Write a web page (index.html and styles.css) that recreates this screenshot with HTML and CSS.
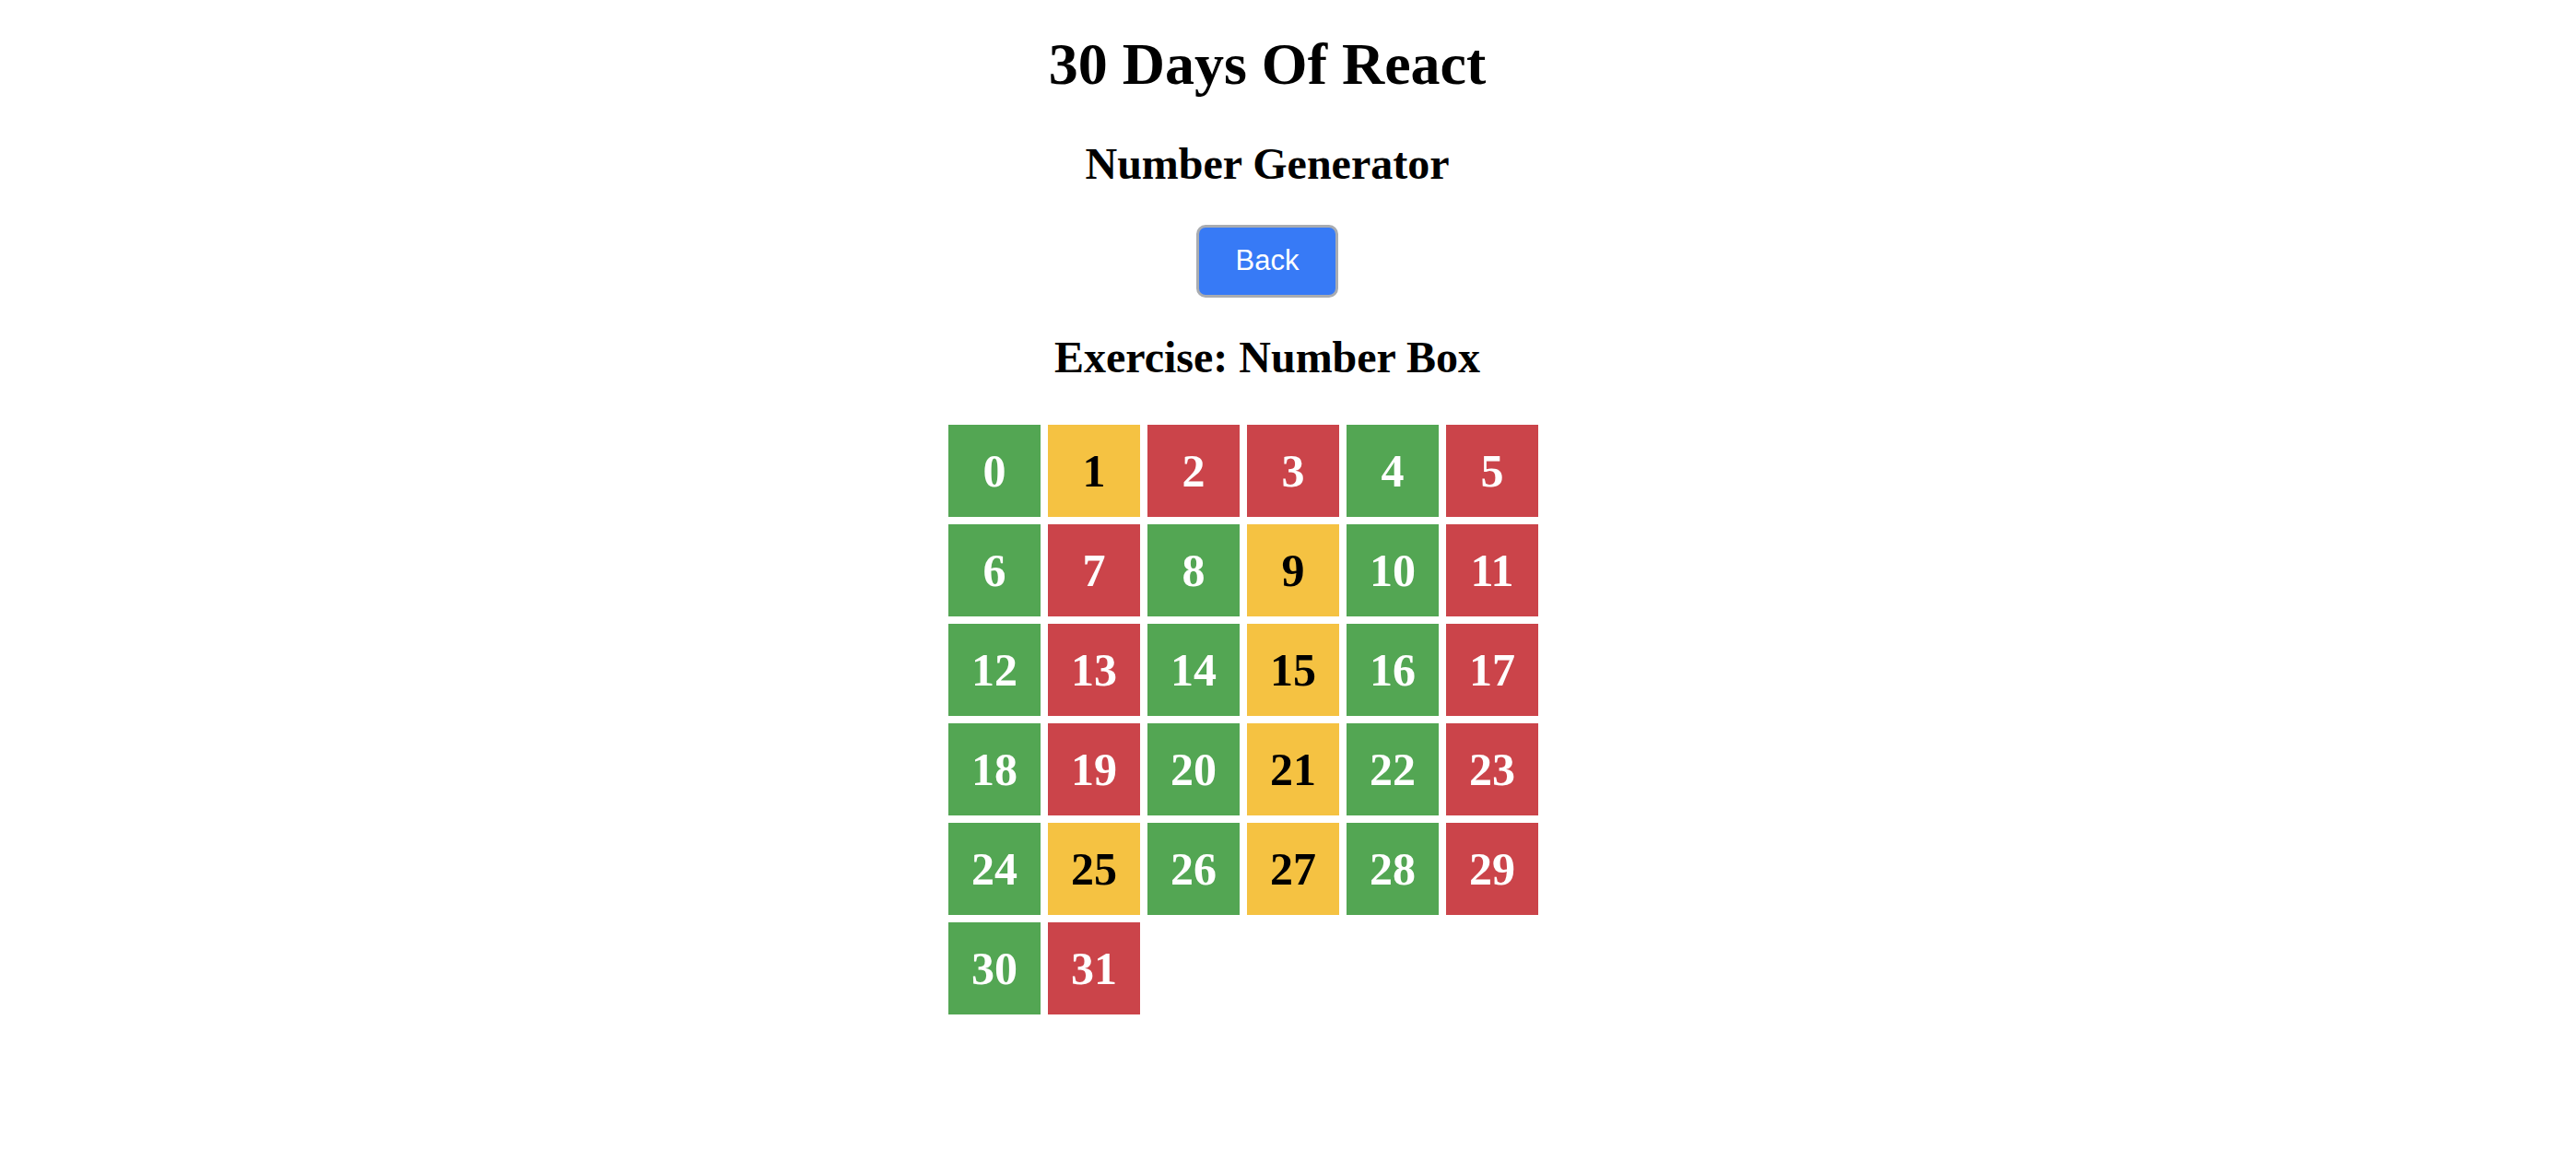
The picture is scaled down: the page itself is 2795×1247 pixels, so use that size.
FILE: index.html
```html
<!DOCTYPE html>
<html lang="en">
<head>
<meta charset="utf-8">
<title>30 Days Of React</title>
<link rel="stylesheet" href="styles.css">
</head>
<body>
<div class="page">
  <h1 class="title">30 Days Of React</h1>
  <h2 class="subtitle">Number Generator</h2>
  <button class="back-btn">Back</button>
  <h2 class="exercise">Exercise: Number Box</h2>
  <div class="grid">
    <div class="box even">0</div>
    <div class="box odd">1</div>
    <div class="box prime">2</div>
    <div class="box prime">3</div>
    <div class="box even">4</div>
    <div class="box prime">5</div>
    <div class="box even">6</div>
    <div class="box prime">7</div>
    <div class="box even">8</div>
    <div class="box odd">9</div>
    <div class="box even">10</div>
    <div class="box prime">11</div>
    <div class="box even">12</div>
    <div class="box prime">13</div>
    <div class="box even">14</div>
    <div class="box odd">15</div>
    <div class="box even">16</div>
    <div class="box prime">17</div>
    <div class="box even">18</div>
    <div class="box prime">19</div>
    <div class="box even">20</div>
    <div class="box odd">21</div>
    <div class="box even">22</div>
    <div class="box prime">23</div>
    <div class="box even">24</div>
    <div class="box odd">25</div>
    <div class="box even">26</div>
    <div class="box odd">27</div>
    <div class="box even">28</div>
    <div class="box prime">29</div>
    <div class="box even">30</div>
    <div class="box prime">31</div>
  </div>
</div>
</body>
</html>
```
FILE: styles.css
```css
html, body {
  margin: 0;
  padding: 0;
  background: #ffffff;
}

.page {
  width: 2750px;
  display: flex;
  flex-direction: column;
  align-items: center;
  font-family: "Liberation Serif", "Times New Roman", serif;
  color: #000;
  padding-top: 33px;
}

.title {
  font-size: 64px;
  line-height: 1.15;
  font-weight: bold;
  margin: 0;
}

.subtitle {
  font-size: 48px;
  line-height: 1.15;
  font-weight: bold;
  margin: 43px 0 0;
}

.back-btn {
  margin-top: 39px;
  height: 79px;
  padding: 0 40px;
  background: #377af6;
  color: #ffffff;
  border: 3px solid #a9acb1;
  border-radius: 10px;
  font-family: "Liberation Sans", Arial, sans-serif;
  font-size: 31px;
}

.exercise {
  font-size: 48px;
  line-height: 1.15;
  font-weight: bold;
  margin: 37px 0 0;
}

.grid {
  box-sizing: border-box;
  width: 700px;
  padding: 4px;
  margin-top: 42px;
  display: flex;
  flex-wrap: wrap;
  gap: 8px;
}

.box {
  width: 100px;
  height: 100px;
  display: flex;
  align-items: center;
  justify-content: center;
  font-size: 50px;
  font-weight: bold;
  color: #ffffff;
}

.even { background: #53a653; }
.prime { background: #cb444a; }
.odd { background: #f5c242; color: #000; }
```
